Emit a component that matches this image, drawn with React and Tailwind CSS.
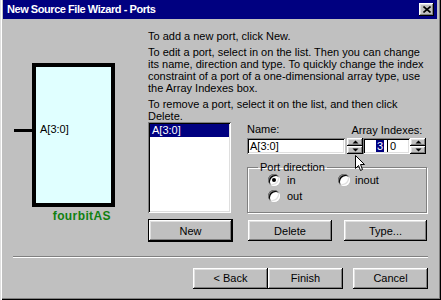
import React from "react";

const raised =
  "bg-[#c0c0c0] shadow-[inset_-1px_-1px_#000,inset_1px_1px_#fff,inset_-2px_-2px_#808080,inset_2px_2px_#dfdfdf]";
const sunken =
  "shadow-[inset_1px_1px_#808080,inset_-1px_-1px_#fff,inset_2px_2px_#000,inset_-2px_-2px_#dfdfdf]";

const Button = ({ children, className = "" }) => (
  <div className={`h-[21px] flex items-center justify-center ${raised} ${className}`}>{children}</div>
);

const Arrow = ({ up }) => (
  <svg width="7" height="4" viewBox="0 0 7 4">
    <polygon points={up ? "3.5,0.5 0.5,3.5 6.5,3.5" : "0.5,0.5 6.5,0.5 3.5,3.5"} fill="#000" />
  </svg>
);

const Spinner = () => (
  <div className="w-[16px] h-[16px] flex flex-col">
    <div className={`h-[8px] flex items-center justify-center ${raised}`}>
      <Arrow up />
    </div>
    <div className={`h-[8px] flex items-center justify-center ${raised}`}>
      <Arrow />
    </div>
  </div>
);

const Radio = ({ checked }) => (
  <div
    className={`w-[12px] h-[12px] rounded-full bg-white flex items-center justify-center ${sunken}`}
  >
    {checked && <div className="w-[4px] h-[4px] rounded-full bg-black" />}
  </div>
);

export default function App() {
  return (
    <div className="relative w-[441px] h-[300px] overflow-hidden bg-[#c0c0c0] text-black text-[11px] font-['Liberation_Sans',Arial,sans-serif] flex flex-col pl-[3px] pr-[4px] pb-[3px] shadow-[inset_1px_0_#dfdfdf,inset_2px_0_#fff,inset_-1px_-1px_#000,inset_-2px_-2px_#808080]">
      {/* title bar */}
      <div className="h-[19px] bg-[#000080] flex items-center pl-[4px] pr-[3px]">
        <span className="font-bold text-white text-[11px] leading-none tracking-[-0.45px]">
          New Source File Wizard - Ports
        </span>
        <div className={`ml-auto w-[15px] h-[13px] flex items-center justify-center ${raised}`}>
          <svg width="8" height="7" viewBox="0 0 8 7">
            <path d="M0.5 0.5 L7.5 6.5 M7.5 0.5 L0.5 6.5" stroke="#000" strokeWidth="1.6" />
          </svg>
        </div>
      </div>

      <div className="flex items-start">
        {/* symbol preview */}
        <div className="w-[145px] pt-[44px] flex flex-col">
          <div className="flex items-start">
            <div className="ml-[11px] mt-[66px] w-[18px] h-[3px] bg-black" />
            <div className="w-[83px] h-[144px] border-4 border-black bg-[#e0ffff] pt-[56px] pl-[4px] leading-[12px]">
              A[3:0]
            </div>
          </div>
          <div className="w-[112px] text-right pr-[4px] mt-[3px] font-bold text-[12px] tracking-[0.4px] text-[#108010] leading-[12px]">
            fourbitAS
          </div>
        </div>

        {/* right side */}
        <div className="w-[289px] pt-[11px] flex flex-col leading-[12px] whitespace-nowrap">
          <div>To add a new port, click New.</div>
          <div className="mt-[4px]">
            <div>To edit a port, select in on the list. Then you can change</div>
            <div>its name, direction and type. To quickly change the index</div>
            <div>constraint of a port of a one-dimensional array type, use</div>
            <div>the Array Indexes box.</div>
          </div>
          <div className="mt-[4px]">
            <div>To remove a port, select it on the list, and then click</div>
            <div>Delete.</div>
          </div>

          <div className="flex items-start">
            <div className={`w-[83px] h-[91px] bg-white p-[2px] ${sunken}`}>
              <div className="h-[13px] leading-[13px] bg-[#000080] text-white pl-[2px]">A[3:0]</div>
            </div>

            <div className="ml-[16px] w-[180px] flex flex-col">
              <div className="flex items-end h-[13px]">
                <span>Name:</span>
                <span className="ml-[72px] translate-y-[1px]">Array Indexes:</span>
              </div>
              <div className="mt-[3px] flex items-center h-[16px]">
                <div className={`w-[98px] h-[16px] bg-white pl-[3px] leading-[16px] ${sunken}`}>A[3:0]</div>
                <div className="ml-[2px]">
                  <Spinner />
                </div>
                <div className={`w-[47px] h-[16px] bg-white flex ${sunken}`}>
                  <div className="w-[24px] flex justify-end items-center pr-[3px]">
                    <span className="bg-[#000080] text-white leading-[12px] px-[1px]">3</span>
                  </div>
                  <div className="w-[1px] bg-black my-[2px]" />
                  <div className="flex-1 pl-[2px] leading-[16px]">0</div>
                </div>
                <Spinner />
              </div>

              <fieldset className="mt-[7px] h-[52px] border border-[#808080] shadow-[1px_1px_#fff,inset_1px_1px_#fff]">
                <legend className="ml-[10px] px-[2px] leading-[13px]">Port direction</legend>
                <div className="grid grid-cols-[70px_auto] gap-y-[4px] pl-[20px]">
                  <div className="flex items-center gap-[7px] h-[12px]">
                    <Radio checked />
                    <span>in</span>
                  </div>
                  <div className="flex items-center gap-[5px] h-[12px]">
                    <Radio />
                    <span>inout</span>
                  </div>
                  <div className="flex items-center gap-[7px] h-[12px]">
                    <Radio />
                    <span>out</span>
                  </div>
                </div>
              </fieldset>
            </div>
          </div>

          <div className="mt-[7px] flex">
            <Button className="ml-[1px] w-[83px] outline outline-1 outline-black">New</Button>
            <Button className="ml-[16px] w-[84px]">Delete</Button>
            <Button className="ml-[12px] w-[83px]">Type...</Button>
          </div>
        </div>
      </div>

      {/* separator */}
      <div className="ml-[10px] w-[415px] mt-[15px] border-t border-t-[#808080] border-b border-b-white" />

      <div className="mt-[10px] flex">
        <Button className="ml-[190px] w-[75px]">&lt; Back</Button>
        <Button className="w-[75px]">Finish</Button>
        <Button className="ml-[10px] w-[75px]">Cancel</Button>
      </div>

      {/* mouse pointer */}
      <svg className="absolute left-[355px] top-[155px]" width="11" height="17" viewBox="0 0 11 17">
        <polygon
          points="0.5,0.5 0.5,13.5 3.5,10.5 5.5,15.5 7.5,14.5 5.5,9.5 9.5,9.5"
          fill="#fff"
          stroke="#000"
          strokeWidth="1"
        />
      </svg>
    </div>
  );
}
